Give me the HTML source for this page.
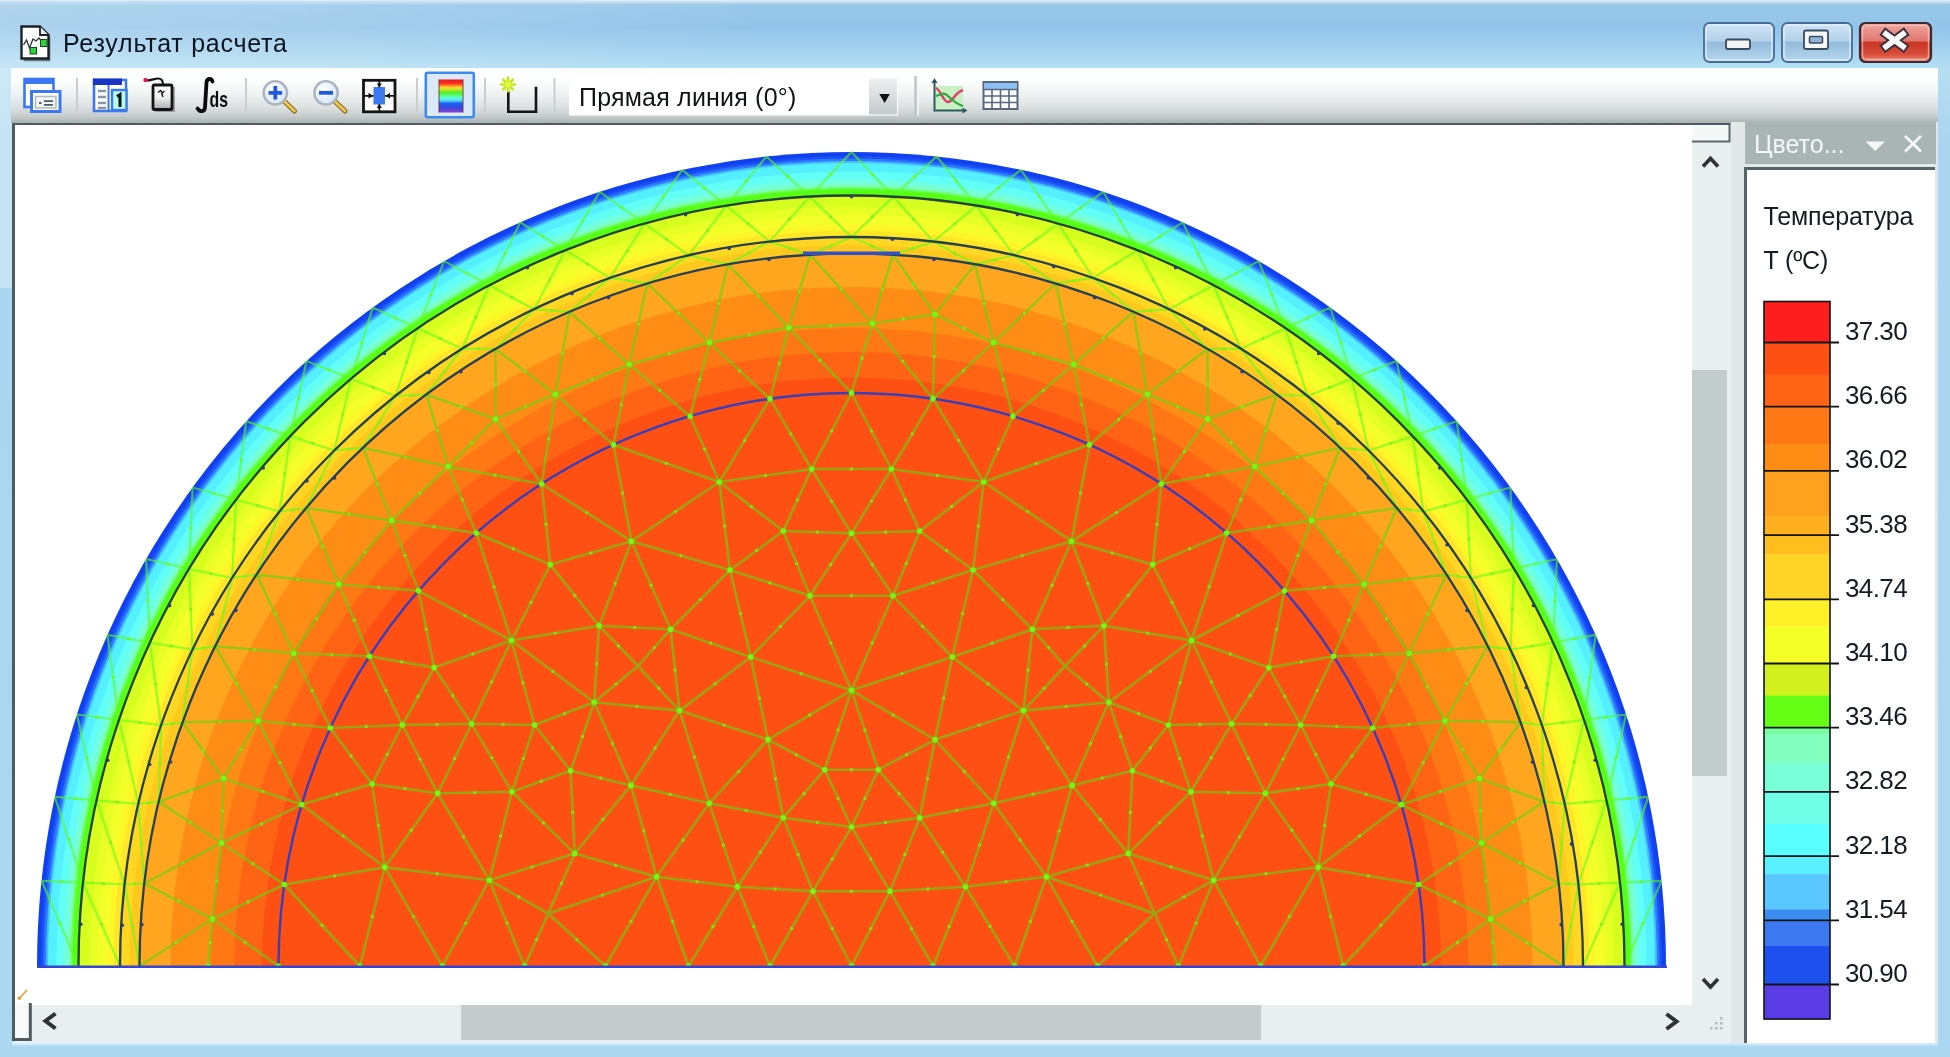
<!DOCTYPE html>
<html lang="ru"><head><meta charset="utf-8"><title>Результат расчета</title>
<style>
html,body{margin:0;padding:0}
body{width:1950px;height:1057px;position:relative;overflow:hidden;background:#acd7f1;font-family:"Liberation Sans","DejaVu Sans",sans-serif;color:#101820}
.abs{position:absolute}
#frame{left:0;top:0;width:1950px;height:1057px;background:linear-gradient(180deg,#e4f0f9 0,#c4def1 2px,#98c7ea 5px,#93c4e9 28px,#a2d0ee 48px,#b4dff3 68px,#aad5f0 140px,#acd7f1 100%)}
#glow{left:0;top:3px;width:760px;height:65px;background:linear-gradient(90deg,rgba(255,255,255,.24) 0,rgba(255,255,255,.16) 45%,rgba(255,255,255,0) 100%)}
#title{left:63px;top:26.500px;font-size:25px;line-height:32px;color:#0c1420;letter-spacing:.75px;white-space:nowrap}
#toolbar{left:11px;top:68px;width:1927px;height:55px;background:linear-gradient(180deg,#ffffff 0,#fcfdfd 25%,#eff2f2 48%,#dde1e1 70%,#c6cccc 88%,#a9b1b1 100%)}
#canvas{left:12px;top:122.500px;width:1680px;height:882.500px;background:#fff;border-left:3px solid #4e5c60;border-top:2.500px solid #4e5c60;box-sizing:border-box}
#lstrip{left:0;top:68px;width:12px;height:220px;background:rgba(255,255,255,.32)}
#vscroll{left:1692px;top:125px;width:39px;height:880px;background:#e9eeee}
#vthumb{left:1692px;top:370px;width:35px;height:406px;background:#c2cdcb}
#hscroll{left:14px;top:1005px;width:1717px;height:37px;background:#e9eeee}
#hthumb{left:461px;top:1005px;width:800px;height:35px;background:#c3cbcb}
#gap{left:1731px;top:122px;width:207px;height:921px;background:#e2e8e8}
#phead{left:1745px;top:122px;width:191px;height:42px;background:#a9b5b3;color:#f4f7f7;font-size:25px;line-height:45px}
#pbody{left:1744px;top:167px;width:191px;height:876px;background:#fff;border-left:3px solid #56646a;border-top:3px solid #56646a;box-sizing:border-box}
.lt{font-size:25px;line-height:30px;color:#141c24;white-space:nowrap;letter-spacing:-.15px}
.lv{font-size:26px;line-height:30px;color:#141c24;white-space:nowrap;letter-spacing:-.6px}
#wrap{position:absolute;left:-12px;top:-12px;width:1974px;height:1081px;background:#acd7f1;filter:blur(.55px)}
#in{position:absolute;left:12px;top:12px;width:1950px;height:1057px}
</style></head><body>
<div id="wrap"><div id="in">
<div id="frame" class="abs"></div><div id="glow" class="abs"></div>
<div id="title" class="abs">Результат расчета</div>
<div id="lstrip" class="abs"></div><div id="toolbar" class="abs"></div>
<div id="canvas" class="abs"></div>
<svg id="plot" width="1678" height="880" viewBox="14 125 1678 880" style="position:absolute;left:14px;top:125px">
<defs><clipPath id="half"><rect x="0" y="100" width="1700" height="867"/></clipPath></defs>
<g clip-path="url(#half)">
<ellipse cx="851.5" cy="966" rx="814.5" ry="814" fill="#1040f0"/>
<ellipse cx="851.5" cy="966" rx="810.5" ry="810" fill="#1a50f8"/>
<ellipse cx="851.5" cy="966" rx="808" ry="807.5" fill="#2e78ff"/>
<ellipse cx="851.5" cy="966" rx="805.5" ry="805" fill="#44c0ff"/>
<ellipse cx="851.5" cy="966" rx="803.5" ry="803" fill="#54f0ff"/>
<ellipse cx="851.5" cy="966" rx="795" ry="794.5" fill="#62fff6"/>
<ellipse cx="851.5" cy="966" rx="788" ry="787" fill="#72ffe2"/>
<ellipse cx="851.5" cy="966" rx="784" ry="782.5" fill="#7cffc4"/>
<ellipse cx="851.5" cy="966" rx="781" ry="779" fill="#70ff60"/>
<ellipse cx="851.5" cy="966" rx="779" ry="777" fill="#56ff14"/>
<ellipse cx="851.5" cy="966" rx="773" ry="770.5" fill="#d6ff20"/>
<ellipse cx="851.5" cy="966" rx="762" ry="759.5" fill="#e8ff26"/>
<ellipse cx="851.5" cy="966" rx="754" ry="751.5" fill="#f4ff2a"/>
<ellipse cx="851.5" cy="966" rx="744" ry="741.5" fill="#fff62a"/>
<ellipse cx="851.5" cy="966" rx="738" ry="735.5" fill="#ffe626"/>
<ellipse cx="851.5" cy="966" rx="731.5" ry="729" fill="#ffd622"/>
<ellipse cx="851.5" cy="966" rx="722" ry="721" fill="#ffc81e"/>
<ellipse cx="851.5" cy="966" rx="712" ry="712.5" fill="#ffa51e"/>
<ellipse cx="851.5" cy="966" rx="681" ry="679" fill="#ff8c14"/>
<ellipse cx="851.5" cy="966" rx="641" ry="638" fill="#ff7814"/>
<ellipse cx="851.5" cy="966" rx="617" ry="614" fill="#ff6414"/>
<ellipse cx="851.5" cy="966" rx="589.5" ry="588.5" fill="#ff5014"/>
<path d="M1544.3 801.7L1479.4 778.5M983.7 482L1071.5 541.2M770 398.8L719.3 482M813 891.2L890 891.2M993.5 342.6L935 314.2M813 891.2L851.5 827M788.7 327.6L872.3 323.5M1207.5 349L1207.6 419M851.5 393L811.6 469M426.3 394.5L448.3 466.5M489.3 880.2L442.4 966M1072 785.4L1046.4 876.8M993.7 803.3L965.5 886.8M952.3 657L1023.5 710.6M935 739.6L878.3 769.7M1409.2 653.3L1364 584.3M301.7 804.6L258 720.8M730 570L750.7 657M965.5 886.8L1014.5 966M330.3 728L293.8 653.3M1072 785.4L993.7 803.3M890 891.2L933 966M768 739.6L824.7 769.7M783.2 817.7L813 891.2M434.2 667.6L402.3 725M1226.7 533L1311.5 520.4M993.7 803.3L919.8 817.7M952.3 657L935 739.6M215.2 646.2L293.8 653.3M690.1 416.2L629.3 364.5M1446.4 574.5L1364 584.3M1544.3 801.7L1481.5 843M878.3 769.7L851.5 690.3M893 595.8L851.5 690.3M339 584.3L391.5 520.4M1132.4 770.7L1191 791.7M983.7 482L891.4 469M770 398.8L709.5 342.6M965.5 886.8L890 891.2M1372.7 728L1331 784M599 625.8L594.2 702.3M301.7 804.6L372 784M1108.8 702.3L1132.4 770.7M933 398.8L891.4 469M1191.5 640.5L1231.5 723.8M647.3 283.4L709.5 342.6M719.3 482L631.5 541.2M670.6 629.3L679.5 710.6M811.6 469L783.3 531M1128.3 853.6L1046.4 876.8M631 785.4L656.6 876.8M1104 625.8L1032.4 629.3M476.3 533L511.5 640.5M594.2 702.3L570.6 770.7M709.3 803.3L737.5 886.8M1132.4 770.7L1128.3 853.6M301.7 804.6L223.6 778.5M1401.3 804.6L1445 720.8M1073.7 364.5L993.5 342.6M1108.8 702.3L1072 785.4M770 398.8L788.7 327.6M670.6 629.3L750.7 657M293.8 653.3L339 584.3M1161.3 484L1147.5 394.2M851.5 393L872.3 323.5M631 785.4L709.3 803.3M813 891.2L770 966M893 595.8L851.5 533.2M594.2 702.3L631 785.4M709.3 803.3L783.2 817.7M1154.7 913.5L1128.3 853.6M1154.7 913.5L1097.5 966M679.5 710.6L709.3 803.3M1191.5 640.5L1104 625.8M1133.5 311.8L1073.7 364.5M933 398.8L983.7 482M284.3 884.5L359.8 966M719.3 482L811.6 469M1128.3 853.6L1213.7 880.2M182.4 722.3L223.6 778.5M824.7 769.7L878.3 769.7M511.5 640.5L599 625.8M891.4 469L851.5 533.2M1071.5 541.2L973 570M709.3 803.3L656.6 876.8M301.7 804.6L221.5 843M1401.3 804.6L1479.4 778.5M599 625.8L670.6 629.3M569.5 311.8L629.3 364.5M1191.5 640.5L1268.8 667.6M1418.7 884.5L1343.2 966M284.3 884.5L384.8 867.3M1191 791.7L1128.3 853.6M570.6 770.7L574.7 853.6M1495 966L1490.7 919M719.3 482L730 570M1340.1 447.7L1311.5 520.4M1161.3 484L1207.6 419M372 784L384.8 867.3M768 739.6L851.5 690.3M1104 625.8L1108.8 702.3M594.2 702.3L679.5 710.6M1520.6 722.3L1445 720.8M511.5 640.5L434.2 667.6M824.7 769.7L851.5 827M284.3 884.5L212.3 919M975.1 264.3L935 314.2M599 625.8L638 666M158.7 801.7L221.5 843M1418.7 884.5L1318.2 867.3M973 570L952.3 657M418.5 590.8L391.5 520.4M1032.4 629.3L1023.5 710.6M369.5 656.2L402.3 725M891.4 469L919.7 531M1071.5 541.2L1152.7 564.6M574.7 853.6L489.3 880.2M569.5 311.8L555.5 394.2M919.8 817.7L890 891.2M919.8 817.7L851.5 827M810 595.8L893 595.8M1032.4 629.3L952.3 657M1300.7 725L1265.3 793.3M709.5 342.6L788.7 327.6M631.5 541.2L550.3 564.6M1161.3 484L1254.7 466.5M369.5 656.2L434.2 667.6M811.6 469L891.4 469M512 791.7L574.7 853.6M548.3 913.5L574.7 853.6M783.3 531L730 570M548.3 913.5L605.5 966M1520.6 722.3L1479.4 778.5M1311.5 520.4L1254.7 466.5M212.3 919L221.5 843M1023.5 710.6L993.7 803.3M973 570L893 595.8M1089.5 444.8L1073.7 364.5M631.5 541.2L670.6 629.3M448.3 466.5L495.4 419M1364 584.3L1311.5 520.4M208 966L212.3 919M1424.5 966L1490.7 919M1089.5 444.8L1071.5 541.2M369.5 656.2L293.8 653.3M256.6 574.5L339 584.3M1331 784L1318.2 867.3M1284.5 590.8L1311.5 520.4M402.3 725L437.7 793.3M613.5 444.8L629.3 364.5M548.3 913.5L524.6 966M306.1 508L391.5 520.4M391.5 520.4L448.3 466.5M975.1 264.3L993.5 342.6M1265.3 793.3L1213.7 880.2M890 891.2L851.5 966M471.5 723.8L512 791.7M1152.7 564.6L1104 625.8M1276.7 394.5L1207.6 419M1023.5 710.6L1072 785.4M933 398.8L935 314.2M993.7 803.3L1046.4 876.8M541.7 484L631.5 541.2M952.3 657L851.5 690.3M437.7 793.3L489.3 880.2M730 570L810 595.8M983.7 482L973 570M548.3 913.5L656.6 876.8M330.3 728L258 720.8M1065 666L1023.5 710.6M783.3 531L851.5 533.2M783.2 817.7L737.5 886.8M541.7 484L555.5 394.2M215.2 646.2L258 720.8M1446.4 574.5L1409.2 653.3M1104 625.8L1065 666M656.6 876.8L688.5 966M256.6 574.5L293.8 653.3M1284.5 590.8L1364 584.3M1558.7 883.3L1481.5 843M402.3 725L372 784M919.7 531L973 570M810 595.8L750.7 657M1401.3 804.6L1331 784M890 891.2L851.5 827M1152.7 564.6L1191.5 640.5M647.3 283.4L629.3 364.5M330.3 728L372 784M933 398.8L872.3 323.5M1481.5 843L1479.4 778.5M1226.7 533L1191.5 640.5M727.9 264.3L709.5 342.6M1318.2 867.3L1260.6 966M550.3 564.6L599 625.8M1012.9 416.2L983.7 482M437.7 793.3L384.8 867.3M1331 784L1265.3 793.3M730 570L670.6 629.3M402.3 725L471.5 723.8M1372.7 728L1300.7 725M919.7 531L893 595.8M1108.8 702.3L1023.5 710.6M1207.6 419L1147.5 394.2M223.6 778.5L258 720.8M768 739.6L783.2 817.7M1168.4 725L1132.4 770.7M541.7 484L495.4 419M1318.2 867.3L1213.7 880.2M851.5 393L788.7 327.6M1490.7 919L1481.5 843M638 666L679.5 710.6M437.7 793.3L512 791.7M727.9 264.3L788.7 327.6M1558.7 883.3L1490.7 919M1154.7 913.5L1178.4 966M679.5 710.6L631 785.4M534.6 725L570.6 770.7M555.5 394.2L629.3 364.5M810.1 254.7L872.3 323.5M1133.5 311.8L1147.5 394.2M933 398.8L993.5 342.6M1072 785.4L1128.3 853.6M139.5 966L212.3 919M1231.5 723.8L1191 791.7M1254.7 466.5L1207.6 419M1396.9 508L1311.5 520.4M144.3 883.3L221.5 843M221.5 843L223.6 778.5M810 595.8L851.5 690.3M476.3 533L448.3 466.5M550.3 564.6L511.5 640.5M476.3 533L550.3 564.6M690.1 416.2L719.3 482M770 398.8L811.6 469M362.9 447.7L448.3 466.5M1154.7 913.5L1046.4 876.8M1401.3 804.6L1481.5 843M489.3 880.2L524.6 966M426.3 394.5L495.4 419M768 739.6L709.3 803.3M1161.3 484L1152.7 564.6M1372.7 728L1409.2 653.3M824.7 769.7L851.5 690.3M1071.5 541.2L1032.4 629.3M965.5 886.8L933 966M1108.8 702.3L1168.4 725M1191.5 640.5L1108.8 702.3M1231.5 723.8L1265.3 793.3M384.8 867.3L442.4 966M670.6 629.3L638 666M418.5 590.8L339 584.3M434.2 667.6L471.5 723.8M1396.9 508L1364 584.3M418.5 590.8L434.2 667.6M810 595.8L851.5 533.2M372 784L437.7 793.3M476.3 533L391.5 520.4M631 785.4L574.7 853.6M690.1 416.2L709.5 342.6M783.3 531L810 595.8M878.3 769.7L851.5 827M594.2 702.3L534.6 725M511.5 640.5L594.2 702.3M1132.4 770.7L1072 785.4M1055.7 283.4L993.5 342.6M362.9 447.7L391.5 520.4M495.4 419L555.5 394.2M1154.7 913.5L1213.7 880.2M679.5 710.6L768 739.6M919.8 817.7L965.5 886.8M534.6 725L512 791.7M1231.5 723.8L1168.4 725M1191.5 640.5L1168.4 725M384.8 867.3L489.3 880.2M1300.7 725L1331 784M719.3 482L783.3 531M418.5 590.8L511.5 640.5M893 595.8L952.3 657M1445 720.8L1409.2 653.3M1372.7 728L1445 720.8M1071.5 541.2L1104 625.8M511.5 640.5L534.6 725M973 570L1032.4 629.3M851.5 393L891.4 469M1300.7 725L1231.5 723.8M384.8 867.3L359.8 966M1191 791.7L1213.7 880.2M1089.5 444.8L1147.5 394.2M631.5 541.2L599 625.8M1479.4 778.5L1445 720.8M613.5 444.8L631.5 541.2M1046.4 876.8L1014.5 966M811.6 469L851.5 533.2M1055.7 283.4L1073.7 364.5M570.6 770.7L631 785.4M750.7 657L679.5 710.6M783.2 817.7L851.5 827M1161.3 484L1071.5 541.2M935 739.6L851.5 690.3M182.4 722.3L258 720.8M878.3 769.7L919.8 817.7M737.5 886.8L770 966M613.5 444.8L555.5 394.2M1284.5 590.8L1268.8 667.6M306.1 508L339 584.3M1265.3 793.3L1318.2 867.3M511.5 640.5L471.5 723.8M471.5 723.8L437.7 793.3M1276.7 394.5L1254.7 466.5M1487.8 646.2L1409.2 653.3M1032.4 629.3L1065 666M935 739.6L919.8 817.7M750.7 657L768 739.6M1340.1 447.7L1254.7 466.5M1213.7 880.2L1178.4 966M512 791.7L489.3 880.2M548.3 913.5L489.3 880.2M1284.5 590.8L1191.5 640.5M278.5 966L212.3 919M1265.3 793.3L1191 791.7M1046.4 876.8L1097.5 966M892.9 254.7L935 314.2M471.5 723.8L534.6 725M1065 666L1108.8 702.3M284.3 884.5L221.5 843M1333.5 656.2L1300.7 725M1023.5 710.6L935 739.6M158.7 801.7L223.6 778.5M1147.5 394.2L1073.7 364.5M570.6 770.7L512 791.7M1089.5 444.8L983.7 482M258 720.8L293.8 653.3M656.6 876.8L605.5 966M737.5 886.8L688.5 966M1268.8 667.6L1231.5 723.8M1046.4 876.8L965.5 886.8M495.5 349L555.5 394.2M1333.5 656.2L1364 584.3M301.7 804.6L384.8 867.3M1418.7 884.5L1481.5 843M919.7 531L851.5 533.2M1333.5 656.2L1268.8 667.6M574.7 853.6L656.6 876.8M629.3 364.5L709.5 342.6M1318.2 867.3L1343.2 966M1487.8 646.2L1445 720.8M1012.9 416.2L993.5 342.6M656.6 876.8L737.5 886.8M935 739.6L993.7 803.3M631.5 541.2L730 570M1213.7 880.2L1260.6 966M983.7 482L919.7 531M737.5 886.8L813 891.2M813 891.2L851.5 966M750.7 657L851.5 690.3M613.5 444.8L719.3 482M1207.5 349L1147.5 394.2M892.9 254.7L872.3 323.5M330.3 728L402.3 725M541.7 484L448.3 466.5M872.3 323.5L935 314.2M541.7 484L550.3 564.6M638 666L594.2 702.3M824.7 769.7L783.2 817.7M1268.8 667.6L1300.7 725M495.5 349L495.4 419M810.1 254.7L788.7 327.6M1333.5 656.2L1409.2 653.3M1563.5 966L1490.7 919M1418.7 884.5L1490.7 919M1401.3 804.6L1318.2 867.3M1226.7 533L1254.7 466.5M144.3 883.3L212.3 919M1226.7 533L1152.7 564.6M1168.4 725L1191 791.7M1012.9 416.2L1073.7 364.5M369.5 656.2L339 584.3" stroke="#5ed90f" stroke-opacity=".62" stroke-width="2.6" fill="none"/>
<path d="M1648.2 796.8L1606.4 800.4M1513.9 568.8L1470.9 578.1M1661.5 880.9L1620 882.7M54.8 796.8L83 882.7M688.7 255.3L647.3 283.4M76.9 714.5L96.6 800.4M149.9 642.5L192.4 649.7M189.1 568.8L232.1 578.1M1240.7 348.7L1207.5 349M444.2 261.1L417.7 328.3M1466.9 499.7L1423.4 511.5M644.7 223.6L688.7 255.3M1564.7 803.8L1558.7 883.3M1020.8 169.8L1058.3 223.6M1578.4 884.4L1563.5 966M124.6 884.4L144.3 883.3M1510.4 487.5L1513.9 568.8M149.9 642.5L161 725.2M1285.3 328.3L1307.6 396M372.7 307.5L351.1 378.8M189.1 568.8L192.4 649.7M334.3 450.5L362.9 447.7M565.4 250.2L609.9 277.9M395.4 396L426.3 394.5M936.6 156.5L893.3 196.6M644.7 223.6L609.9 277.9M1564.7 803.8L1544.3 801.7M146.1 559L189.1 568.8M1020.8 169.8L976.6 205.7M1137.6 250.2L1168.9 309.2M933.4 241.6L975.1 264.3M192.6 487.5L236.1 499.7M1168.9 309.2L1133.5 311.8M1213.6 285.3L1240.7 348.7M1456.8 421.3L1412.7 436.1M1510.4 487.5L1466.9 499.7M1553.1 642.5L1542 725.2M1542 725.2L1520.6 722.3M1584 720L1564.7 803.8M334.3 450.5L306.1 508M565.4 250.2L534.1 309.2M851.5 237L892.9 254.7M146.1 559L149.9 642.5M1137.6 250.2L1093.1 277.9M1368.7 450.5L1396.9 508M599.8 191.8L644.7 223.6M682.2 169.8L726.4 205.7M1553.1 642.5L1510.6 649.7M1182.8 222.4L1213.6 285.3M1258.7 261.1L1285.3 328.3M107.4 634.9L119 720M236.1 499.7L279.6 511.5M1595.6 634.9L1584 720M279.6 511.5L256.6 574.5M290.3 436.1L334.3 450.5M1626.1 714.5L1606.4 800.4M520.2 222.4L489.4 285.3M1368.7 450.5L1340.1 447.7M599.8 191.8L565.4 250.2M726.4 205.7L769.6 241.6M41.5 880.9L83 882.7M769.6 241.6L727.9 264.3M809.7 196.6L851.5 237M1103.2 191.8L1058.3 223.6M1182.8 222.4L1137.6 250.2M138.3 803.8L158.7 801.7M1307.6 396L1276.7 394.5M1556.9 559L1553.1 642.5M1351.9 378.8L1368.7 450.5M236.1 499.7L232.1 578.1M1595.6 634.9L1553.1 642.5M462.3 348.7L495.5 349M726.4 205.7L688.7 255.3M246.2 421.3L290.3 436.1M1556.9 559L1513.9 568.8M766.4 156.5L809.7 196.6M1578.4 884.4L1558.7 883.3M1620 882.7L1583 966M1014.3 255.3L1055.7 283.4M124.6 884.4L139.5 966M96.6 800.4L138.3 803.8M1285.3 328.3L1240.7 348.7M1396.5 361.1L1412.7 436.1M246.2 421.3L236.1 499.7M1606.4 800.4L1578.4 884.4M395.4 396L362.9 447.7M417.7 328.3L462.3 348.7M83 882.7L124.6 884.4M766.4 156.5L726.4 205.7M933.4 241.6L892.9 254.7M976.6 205.7L1014.3 255.3M192.6 487.5L189.1 568.8M1213.6 285.3L1168.9 309.2M1330.3 307.5L1351.9 378.8M1014.3 255.3L975.1 264.3M351.1 378.8L395.4 396M1423.4 511.5L1446.4 574.5M1470.9 578.1L1487.8 646.2M1584 720L1542 725.2M1648.2 796.8L1620 882.7M1606.4 800.4L1564.7 803.8M54.8 796.8L96.6 800.4M851.5 237L810.1 254.7M83 882.7L120 966M161 725.2L182.4 722.3M192.4 649.7L215.2 646.2M351.1 378.8L334.3 450.5M1423.4 511.5L1396.9 508M682.2 169.8L644.7 223.6M609.9 277.9L647.3 283.4M893.3 196.6L933.4 241.6M1258.7 261.1L1213.6 285.3M1412.7 436.1L1423.4 511.5M161 725.2L158.7 801.7M290.3 436.1L279.6 511.5M192.4 649.7L182.4 722.3M372.7 307.5L417.7 328.3M1626.1 714.5L1584 720M534.1 309.2L569.5 311.8M41.5 880.9L78.5 966M809.7 196.6L769.6 241.6M609.9 277.9L569.5 311.8M936.6 156.5L976.6 205.7M893.3 196.6L851.5 237M1093.1 277.9L1133.5 311.8M306.5 361.1L351.1 378.8M1168.9 309.2L1207.5 349M138.3 803.8L144.3 883.3M1351.9 378.8L1307.6 396M1456.8 421.3L1466.9 499.7M1412.7 436.1L1368.7 450.5M1510.6 649.7L1520.6 722.3M851.5 152L893.3 196.6M462.3 348.7L426.3 394.5M1542 725.2L1544.3 801.7M534.1 309.2L495.5 349M119 720L161 725.2M1093.1 277.9L1055.7 283.4M306.5 361.1L290.3 436.1M489.4 285.3L534.1 309.2M1510.6 649.7L1487.8 646.2M851.5 152L809.7 196.6M1620 882.7L1578.4 884.4M1058.3 223.6L1093.1 277.9M96.6 800.4L124.6 884.4M107.4 634.9L149.9 642.5M1396.5 361.1L1351.9 378.8M119 720L138.3 803.8M232.1 578.1L256.6 574.5M1513.9 568.8L1510.6 649.7M279.6 511.5L306.1 508M1661.5 880.9L1624.5 966M417.7 328.3L395.4 396M520.2 222.4L565.4 250.2M489.4 285.3L462.3 348.7M688.7 255.3L727.9 264.3M76.9 714.5L119 720M769.6 241.6L810.1 254.7M976.6 205.7L933.4 241.6M1103.2 191.8L1137.6 250.2M1330.3 307.5L1285.3 328.3M1058.3 223.6L1014.3 255.3M1240.7 348.7L1276.7 394.5M444.2 261.1L489.4 285.3M1466.9 499.7L1470.9 578.1M1307.6 396L1340.1 447.7M1470.9 578.1L1446.4 574.5M232.1 578.1L215.2 646.2" stroke="#58ff18" stroke-opacity=".6" stroke-width="2.2" fill="none"/>
<ellipse cx="851.5" cy="966" rx="773" ry="770.5" fill="none" stroke="#26403a" stroke-width="2.3"/>
<ellipse cx="851.5" cy="966" rx="731.5" ry="729" fill="none" stroke="#26404c" stroke-width="2.3"/>
<ellipse cx="851.5" cy="966" rx="712" ry="712.5" fill="none" stroke="#264054" stroke-width="2.3"/>
<ellipse cx="851.5" cy="966" rx="573" ry="573" fill="none" stroke="#3a3eb8" stroke-width="2.4"/>
<g fill="#7cf018" fill-opacity=".8"><circle cx="1511.9" cy="790.1" r="1.7"/><circle cx="1627.3" cy="798.6" r="1.7"/><circle cx="1492.4" cy="573.5" r="1.7"/><circle cx="1027.6" cy="511.6" r="1.7"/><circle cx="744.6" cy="440.4" r="1.7"/><circle cx="851.5" cy="891.2" r="1.7"/><circle cx="964.2" cy="328.4" r="1.7"/><circle cx="832.2" cy="859.1" r="1.7"/><circle cx="830.5" cy="325.6" r="1.7"/><circle cx="1207.5" cy="384" r="1.7"/><circle cx="1640.8" cy="881.8" r="1.7"/><circle cx="831.5" cy="431" r="1.7"/><circle cx="437.3" cy="430.5" r="1.7"/><circle cx="465.9" cy="923.1" r="1.7"/><circle cx="1059.2" cy="831.1" r="1.7"/><circle cx="68.9" cy="839.7" r="1.7"/><circle cx="668" cy="269.4" r="1.7"/><circle cx="979.6" cy="845" r="1.7"/><circle cx="987.9" cy="683.8" r="1.7"/><circle cx="86.7" cy="757.4" r="1.7"/><circle cx="171.2" cy="646.1" r="1.7"/><circle cx="906.6" cy="754.7" r="1.7"/><circle cx="210.6" cy="573.5" r="1.7"/><circle cx="1386.6" cy="618.8" r="1.7"/><circle cx="279.9" cy="762.7" r="1.7"/><circle cx="740.4" cy="613.5" r="1.7"/><circle cx="990" cy="926.4" r="1.7"/><circle cx="312" cy="690.6" r="1.7"/><circle cx="1224.1" cy="348.8" r="1.7"/><circle cx="1032.8" cy="794.3" r="1.7"/><circle cx="911.5" cy="928.6" r="1.7"/><circle cx="431" cy="294.7" r="1.7"/><circle cx="796.4" cy="754.7" r="1.7"/><circle cx="1445.1" cy="505.6" r="1.7"/><circle cx="798.1" cy="854.5" r="1.7"/><circle cx="418.2" cy="696.3" r="1.7"/><circle cx="1269.1" cy="526.7" r="1.7"/><circle cx="956.8" cy="810.5" r="1.7"/><circle cx="943.6" cy="698.3" r="1.7"/><circle cx="254.5" cy="649.8" r="1.7"/><circle cx="666.7" cy="239.4" r="1.7"/><circle cx="659.7" cy="390.4" r="1.7"/><circle cx="1405.2" cy="579.4" r="1.7"/><circle cx="1561.7" cy="843.5" r="1.7"/><circle cx="1512.9" cy="822.3" r="1.7"/><circle cx="864.9" cy="730" r="1.7"/><circle cx="872.2" cy="643" r="1.7"/><circle cx="1039.6" cy="196.7" r="1.7"/><circle cx="365.2" cy="552.3" r="1.7"/><circle cx="1161.7" cy="781.2" r="1.7"/><circle cx="937.5" cy="475.5" r="1.7"/><circle cx="739.7" cy="370.7" r="1.7"/><circle cx="1571" cy="925.2" r="1.7"/><circle cx="927.8" cy="889" r="1.7"/><circle cx="1351.9" cy="756" r="1.7"/><circle cx="596.6" cy="664" r="1.7"/><circle cx="336.9" cy="794.3" r="1.7"/><circle cx="1120.6" cy="736.5" r="1.7"/><circle cx="912.2" cy="433.9" r="1.7"/><circle cx="1211.5" cy="682.1" r="1.7"/><circle cx="678.4" cy="313" r="1.7"/><circle cx="675.4" cy="511.6" r="1.7"/><circle cx="675" cy="670" r="1.7"/><circle cx="134.5" cy="883.8" r="1.7"/><circle cx="1512.1" cy="528.2" r="1.7"/><circle cx="797.5" cy="500" r="1.7"/><circle cx="155.5" cy="683.9" r="1.7"/><circle cx="1296.4" cy="362.2" r="1.7"/><circle cx="1087.3" cy="865.2" r="1.7"/><circle cx="643.8" cy="831.1" r="1.7"/><circle cx="1068.2" cy="627.5" r="1.7"/><circle cx="493.9" cy="586.7" r="1.7"/><circle cx="361.9" cy="343.1" r="1.7"/><circle cx="582.4" cy="736.5" r="1.7"/><circle cx="190.8" cy="609.2" r="1.7"/><circle cx="348.6" cy="449.1" r="1.7"/><circle cx="723.4" cy="845" r="1.7"/><circle cx="1130.3" cy="812.2" r="1.7"/><circle cx="262.7" cy="791.5" r="1.7"/><circle cx="1423.1" cy="762.7" r="1.7"/><circle cx="587.6" cy="264.1" r="1.7"/><circle cx="410.9" cy="395.3" r="1.7"/><circle cx="1033.6" cy="353.6" r="1.7"/><circle cx="1090.4" cy="743.8" r="1.7"/><circle cx="779.3" cy="363.2" r="1.7"/><circle cx="710.7" cy="643.1" r="1.7"/><circle cx="316.4" cy="618.8" r="1.7"/><circle cx="915" cy="176.5" r="1.7"/><circle cx="1154.4" cy="439.1" r="1.7"/><circle cx="861.9" cy="358.2" r="1.7"/><circle cx="627.3" cy="250.7" r="1.7"/><circle cx="670.1" cy="794.3" r="1.7"/><circle cx="791.5" cy="928.6" r="1.7"/><circle cx="1554.5" cy="802.7" r="1.7"/><circle cx="167.6" cy="563.9" r="1.7"/><circle cx="872.2" cy="564.5" r="1.7"/><circle cx="998.7" cy="187.7" r="1.7"/><circle cx="1153.3" cy="279.7" r="1.7"/><circle cx="612.6" cy="743.8" r="1.7"/><circle cx="746.2" cy="810.5" r="1.7"/><circle cx="954.3" cy="253" r="1.7"/><circle cx="214.3" cy="493.6" r="1.7"/><circle cx="1141.5" cy="883.5" r="1.7"/><circle cx="1151.2" cy="310.5" r="1.7"/><circle cx="1126.1" cy="939.8" r="1.7"/><circle cx="1227.1" cy="317" r="1.7"/><circle cx="694.4" cy="757" r="1.7"/><circle cx="1147.8" cy="633.1" r="1.7"/><circle cx="1103.6" cy="338.1" r="1.7"/><circle cx="958.4" cy="440.4" r="1.7"/><circle cx="1434.7" cy="428.7" r="1.7"/><circle cx="322.1" cy="925.2" r="1.7"/><circle cx="765.5" cy="475.5" r="1.7"/><circle cx="1488.7" cy="493.6" r="1.7"/><circle cx="1547.5" cy="683.9" r="1.7"/><circle cx="1171" cy="866.9" r="1.7"/><circle cx="203" cy="750.4" r="1.7"/><circle cx="851.5" cy="769.7" r="1.7"/><circle cx="1531.3" cy="723.8" r="1.7"/><circle cx="555.2" cy="633.1" r="1.7"/><circle cx="871.5" cy="501.1" r="1.7"/><circle cx="1022.2" cy="555.6" r="1.7"/><circle cx="1574.3" cy="761.9" r="1.7"/><circle cx="320.2" cy="479.3" r="1.7"/><circle cx="683" cy="840" r="1.7"/><circle cx="261.6" cy="823.8" r="1.7"/><circle cx="1440.3" cy="791.5" r="1.7"/><circle cx="634.8" cy="627.5" r="1.7"/><circle cx="549.7" cy="279.7" r="1.7"/><circle cx="599.4" cy="338.1" r="1.7"/><circle cx="1230.2" cy="654" r="1.7"/><circle cx="1380.9" cy="925.2" r="1.7"/><circle cx="334.6" cy="875.9" r="1.7"/><circle cx="1159.7" cy="822.7" r="1.7"/><circle cx="572.7" cy="812.2" r="1.7"/><circle cx="1492.8" cy="942.5" r="1.7"/><circle cx="724.6" cy="526" r="1.7"/><circle cx="872.2" cy="245.9" r="1.7"/><circle cx="1325.8" cy="484.1" r="1.7"/><circle cx="1184.4" cy="451.5" r="1.7"/><circle cx="378.4" cy="825.6" r="1.7"/><circle cx="809.8" cy="715" r="1.7"/><circle cx="1106.4" cy="664" r="1.7"/><circle cx="148" cy="600.7" r="1.7"/><circle cx="636.9" cy="706.5" r="1.7"/><circle cx="1115.4" cy="264.1" r="1.7"/><circle cx="1482.8" cy="721.6" r="1.7"/><circle cx="472.9" cy="654" r="1.7"/><circle cx="838.1" cy="798.4" r="1.7"/><circle cx="248.3" cy="901.7" r="1.7"/><circle cx="955.1" cy="289.3" r="1.7"/><circle cx="618.5" cy="645.9" r="1.7"/><circle cx="1382.8" cy="479.3" r="1.7"/><circle cx="190.1" cy="822.3" r="1.7"/><circle cx="1368.4" cy="875.9" r="1.7"/><circle cx="622.3" cy="207.7" r="1.7"/><circle cx="962.6" cy="613.5" r="1.7"/><circle cx="405" cy="555.6" r="1.7"/><circle cx="1028" cy="670" r="1.7"/><circle cx="704.3" cy="187.7" r="1.7"/><circle cx="1531.8" cy="646.1" r="1.7"/><circle cx="385.9" cy="690.6" r="1.7"/><circle cx="905.5" cy="500" r="1.7"/><circle cx="1112.1" cy="552.9" r="1.7"/><circle cx="1198.2" cy="253.8" r="1.7"/><circle cx="532" cy="866.9" r="1.7"/><circle cx="562.5" cy="353" r="1.7"/><circle cx="904.9" cy="854.5" r="1.7"/><circle cx="1272" cy="294.7" r="1.7"/><circle cx="885.6" cy="822.4" r="1.7"/><circle cx="113.2" cy="677.4" r="1.7"/><circle cx="851.5" cy="595.8" r="1.7"/><circle cx="992.4" cy="643.1" r="1.7"/><circle cx="1283" cy="759.1" r="1.7"/><circle cx="749.1" cy="335.1" r="1.7"/><circle cx="590.9" cy="552.9" r="1.7"/><circle cx="257.9" cy="505.6" r="1.7"/><circle cx="1208" cy="475.2" r="1.7"/><circle cx="401.8" cy="661.9" r="1.7"/><circle cx="851.5" cy="469" r="1.7"/><circle cx="1589.8" cy="677.4" r="1.7"/><circle cx="268.1" cy="543" r="1.7"/><circle cx="543.4" cy="822.7" r="1.7"/><circle cx="561.5" cy="883.5" r="1.7"/><circle cx="756.6" cy="550.5" r="1.7"/><circle cx="312.3" cy="443.3" r="1.7"/><circle cx="576.9" cy="939.8" r="1.7"/><circle cx="1500" cy="750.4" r="1.7"/><circle cx="1283.1" cy="493.4" r="1.7"/><circle cx="1616.3" cy="757.4" r="1.7"/><circle cx="504.8" cy="253.8" r="1.7"/><circle cx="216.9" cy="881" r="1.7"/><circle cx="1354.4" cy="449.1" r="1.7"/><circle cx="1008.6" cy="757" r="1.7"/><circle cx="582.6" cy="221" r="1.7"/><circle cx="748" cy="223.6" r="1.7"/><circle cx="933" cy="582.9" r="1.7"/><circle cx="1081.6" cy="404.6" r="1.7"/><circle cx="62.2" cy="881.8" r="1.7"/><circle cx="748.7" cy="253" r="1.7"/><circle cx="830.6" cy="216.8" r="1.7"/><circle cx="651" cy="585.2" r="1.7"/><circle cx="1080.7" cy="207.7" r="1.7"/><circle cx="471.9" cy="442.8" r="1.7"/><circle cx="1337.8" cy="552.3" r="1.7"/><circle cx="1160.2" cy="236.3" r="1.7"/><circle cx="148.5" cy="802.7" r="1.7"/><circle cx="210.2" cy="942.5" r="1.7"/><circle cx="1292.1" cy="395.3" r="1.7"/><circle cx="1457.6" cy="942.5" r="1.7"/><circle cx="1555" cy="600.7" r="1.7"/><circle cx="1360.3" cy="414.6" r="1.7"/><circle cx="1080.5" cy="493" r="1.7"/><circle cx="331.6" cy="654.8" r="1.7"/><circle cx="234.1" cy="538.9" r="1.7"/><circle cx="297.8" cy="579.4" r="1.7"/><circle cx="1324.6" cy="825.6" r="1.7"/><circle cx="1298" cy="555.6" r="1.7"/><circle cx="1574.3" cy="638.7" r="1.7"/><circle cx="420" cy="759.1" r="1.7"/><circle cx="621.4" cy="404.6" r="1.7"/><circle cx="536.5" cy="939.8" r="1.7"/><circle cx="348.8" cy="514.2" r="1.7"/><circle cx="419.9" cy="493.4" r="1.7"/><circle cx="984.3" cy="303.5" r="1.7"/><circle cx="1239.5" cy="836.8" r="1.7"/><circle cx="478.9" cy="348.8" r="1.7"/><circle cx="870.8" cy="928.6" r="1.7"/><circle cx="491.8" cy="757.8" r="1.7"/><circle cx="1128.3" cy="595.2" r="1.7"/><circle cx="1242.1" cy="406.7" r="1.7"/><circle cx="1047.8" cy="748" r="1.7"/><circle cx="934" cy="356.5" r="1.7"/><circle cx="1020.1" cy="840" r="1.7"/><circle cx="707.6" cy="230.5" r="1.7"/><circle cx="586.6" cy="512.6" r="1.7"/><circle cx="901.9" cy="673.6" r="1.7"/><circle cx="463.5" cy="836.8" r="1.7"/><circle cx="268.3" cy="428.7" r="1.7"/><circle cx="770" cy="582.9" r="1.7"/><circle cx="978.4" cy="526" r="1.7"/><circle cx="602.5" cy="895.1" r="1.7"/><circle cx="294.1" cy="724.4" r="1.7"/><circle cx="1044.2" cy="688.3" r="1.7"/><circle cx="817.4" cy="532.1" r="1.7"/><circle cx="760.4" cy="852.2" r="1.7"/><circle cx="1535.4" cy="563.9" r="1.7"/><circle cx="548.6" cy="439.1" r="1.7"/><circle cx="236.6" cy="683.5" r="1.7"/><circle cx="788" cy="176.5" r="1.7"/><circle cx="1427.8" cy="613.9" r="1.7"/><circle cx="1084.5" cy="645.9" r="1.7"/><circle cx="672.5" cy="921.4" r="1.7"/><circle cx="275.2" cy="613.9" r="1.7"/><circle cx="1568.5" cy="883.8" r="1.7"/><circle cx="1324.3" cy="587.5" r="1.7"/><circle cx="1520.1" cy="863.1" r="1.7"/><circle cx="1601.5" cy="924.3" r="1.7"/><circle cx="387.1" cy="754.5" r="1.7"/><circle cx="946.4" cy="550.5" r="1.7"/><circle cx="1035" cy="269.4" r="1.7"/><circle cx="780.4" cy="626.4" r="1.7"/><circle cx="1366.1" cy="794.3" r="1.7"/><circle cx="870.8" cy="859.1" r="1.7"/><circle cx="1172.1" cy="602.5" r="1.7"/><circle cx="638.3" cy="324" r="1.7"/><circle cx="132" cy="925.2" r="1.7"/><circle cx="351.1" cy="756" r="1.7"/><circle cx="117.5" cy="802.1" r="1.7"/><circle cx="902.7" cy="361.2" r="1.7"/><circle cx="1480.5" cy="810.8" r="1.7"/><circle cx="1209.1" cy="586.7" r="1.7"/><circle cx="718.7" cy="303.5" r="1.7"/><circle cx="1263" cy="338.5" r="1.7"/><circle cx="1289.4" cy="916.6" r="1.7"/><circle cx="1404.6" cy="398.6" r="1.7"/><circle cx="574.6" cy="595.2" r="1.7"/><circle cx="998.3" cy="449.1" r="1.7"/><circle cx="411.2" cy="830.3" r="1.7"/><circle cx="1298.2" cy="788.6" r="1.7"/><circle cx="241.2" cy="460.5" r="1.7"/><circle cx="700.3" cy="599.6" r="1.7"/><circle cx="436.9" cy="724.4" r="1.7"/><circle cx="1336.7" cy="726.5" r="1.7"/><circle cx="906.4" cy="563.4" r="1.7"/><circle cx="1592.4" cy="842.4" r="1.7"/><circle cx="379.2" cy="421.9" r="1.7"/><circle cx="1066.2" cy="706.5" r="1.7"/><circle cx="440" cy="338.5" r="1.7"/><circle cx="1177.5" cy="406.6" r="1.7"/><circle cx="240.8" cy="749.6" r="1.7"/><circle cx="775.6" cy="778.7" r="1.7"/><circle cx="1150.4" cy="747.9" r="1.7"/><circle cx="103.8" cy="883.5" r="1.7"/><circle cx="518.6" cy="451.5" r="1.7"/><circle cx="1266" cy="873.8" r="1.7"/><circle cx="820.1" cy="360.3" r="1.7"/><circle cx="1486.1" cy="881" r="1.7"/><circle cx="746.4" cy="181.1" r="1.7"/><circle cx="658.8" cy="688.3" r="1.7"/><circle cx="474.9" cy="792.5" r="1.7"/><circle cx="913.2" cy="248.1" r="1.7"/><circle cx="995.4" cy="230.5" r="1.7"/><circle cx="758.3" cy="296" r="1.7"/><circle cx="1524.7" cy="901.1" r="1.7"/><circle cx="190.9" cy="528.2" r="1.7"/><circle cx="1166.6" cy="939.8" r="1.7"/><circle cx="1191.2" cy="297.2" r="1.7"/><circle cx="655.2" cy="748" r="1.7"/><circle cx="1341.1" cy="343.1" r="1.7"/><circle cx="994.7" cy="259.8" r="1.7"/><circle cx="552.6" cy="747.9" r="1.7"/><circle cx="592.4" cy="379.4" r="1.7"/><circle cx="841.2" cy="289.1" r="1.7"/><circle cx="1140.5" cy="353" r="1.7"/><circle cx="963.3" cy="370.7" r="1.7"/><circle cx="1100.2" cy="819.5" r="1.7"/><circle cx="175.9" cy="942.5" r="1.7"/><circle cx="373.2" cy="387.4" r="1.7"/><circle cx="1211.2" cy="757.8" r="1.7"/><circle cx="1231.2" cy="442.8" r="1.7"/><circle cx="1434.9" cy="543" r="1.7"/><circle cx="1354.2" cy="514.2" r="1.7"/><circle cx="182.9" cy="863.1" r="1.7"/><circle cx="222.6" cy="810.8" r="1.7"/><circle cx="830.8" cy="643" r="1.7"/><circle cx="462.3" cy="499.7" r="1.7"/><circle cx="1479.3" cy="612.2" r="1.7"/><circle cx="530.9" cy="602.5" r="1.7"/><circle cx="513.3" cy="548.8" r="1.7"/><circle cx="704.7" cy="449.1" r="1.7"/><circle cx="1563" cy="722.6" r="1.7"/><circle cx="1634.1" cy="839.7" r="1.7"/><circle cx="790.8" cy="433.9" r="1.7"/><circle cx="405.6" cy="457.1" r="1.7"/><circle cx="1100.6" cy="895.1" r="1.7"/><circle cx="1441.4" cy="823.8" r="1.7"/><circle cx="1585.5" cy="802.1" r="1.7"/><circle cx="507" cy="923.1" r="1.7"/><circle cx="460.9" cy="406.7" r="1.7"/><circle cx="75.7" cy="798.6" r="1.7"/><circle cx="830.8" cy="245.9" r="1.7"/><circle cx="738.6" cy="771.5" r="1.7"/><circle cx="101.5" cy="924.3" r="1.7"/><circle cx="171.7" cy="723.8" r="1.7"/><circle cx="1157" cy="524.3" r="1.7"/><circle cx="203.8" cy="648" r="1.7"/><circle cx="1391" cy="690.6" r="1.7"/><circle cx="838.1" cy="730" r="1.7"/><circle cx="1052" cy="585.2" r="1.7"/><circle cx="949.2" cy="926.4" r="1.7"/><circle cx="1138.6" cy="713.6" r="1.7"/><circle cx="1150.2" cy="671.4" r="1.7"/><circle cx="342.7" cy="414.6" r="1.7"/><circle cx="1248.4" cy="758.5" r="1.7"/><circle cx="413.6" cy="916.6" r="1.7"/><circle cx="654.3" cy="647.6" r="1.7"/><circle cx="378.7" cy="587.5" r="1.7"/><circle cx="1410.2" cy="509.7" r="1.7"/><circle cx="452.9" cy="695.7" r="1.7"/><circle cx="1380.5" cy="546.2" r="1.7"/><circle cx="426.3" cy="629.2" r="1.7"/><circle cx="663.4" cy="196.7" r="1.7"/><circle cx="830.8" cy="564.5" r="1.7"/><circle cx="404.9" cy="788.6" r="1.7"/><circle cx="628.6" cy="280.7" r="1.7"/><circle cx="433.9" cy="526.7" r="1.7"/><circle cx="602.9" cy="819.5" r="1.7"/><circle cx="699.8" cy="379.4" r="1.7"/><circle cx="913.4" cy="219.1" r="1.7"/><circle cx="796.6" cy="563.4" r="1.7"/><circle cx="864.9" cy="798.4" r="1.7"/><circle cx="564.4" cy="713.6" r="1.7"/><circle cx="552.9" cy="671.4" r="1.7"/><circle cx="1102.2" cy="778" r="1.7"/><circle cx="1024.6" cy="313" r="1.7"/><circle cx="377.2" cy="484.1" r="1.7"/><circle cx="525.5" cy="406.6" r="1.7"/><circle cx="1184.2" cy="896.9" r="1.7"/><circle cx="723.8" cy="725.1" r="1.7"/><circle cx="942.6" cy="852.2" r="1.7"/><circle cx="523.3" cy="758.4" r="1.7"/><circle cx="1236.2" cy="273.2" r="1.7"/><circle cx="1200" cy="724.4" r="1.7"/><circle cx="1180" cy="682.8" r="1.7"/><circle cx="437.1" cy="873.8" r="1.7"/><circle cx="1315.8" cy="754.5" r="1.7"/><circle cx="751.3" cy="506.5" r="1.7"/><circle cx="465" cy="615.6" r="1.7"/><circle cx="1418.1" cy="473.8" r="1.7"/><circle cx="159.9" cy="763.5" r="1.7"/><circle cx="922.6" cy="626.4" r="1.7"/><circle cx="1427.1" cy="687" r="1.7"/><circle cx="284.9" cy="473.8" r="1.7"/><circle cx="187.4" cy="686" r="1.7"/><circle cx="395.2" cy="317.9" r="1.7"/><circle cx="1408.9" cy="724.4" r="1.7"/><circle cx="1087.8" cy="583.5" r="1.7"/><circle cx="523" cy="682.8" r="1.7"/><circle cx="1605.1" cy="717.2" r="1.7"/><circle cx="551.8" cy="310.5" r="1.7"/><circle cx="1002.7" cy="599.6" r="1.7"/><circle cx="871.4" cy="431" r="1.7"/><circle cx="1266.1" cy="724.4" r="1.7"/><circle cx="372.3" cy="916.6" r="1.7"/><circle cx="1202.3" cy="836" r="1.7"/><circle cx="1118.5" cy="419.5" r="1.7"/><circle cx="60" cy="923.5" r="1.7"/><circle cx="789.6" cy="219.1" r="1.7"/><circle cx="615.2" cy="583.5" r="1.7"/><circle cx="589.7" cy="294.8" r="1.7"/><circle cx="956.6" cy="181.1" r="1.7"/><circle cx="872.4" cy="216.8" r="1.7"/><circle cx="1462.2" cy="749.6" r="1.7"/><circle cx="1113.3" cy="294.8" r="1.7"/><circle cx="622.5" cy="493" r="1.7"/><circle cx="1030.5" cy="921.4" r="1.7"/><circle cx="328.8" cy="369.9" r="1.7"/><circle cx="831.5" cy="501.1" r="1.7"/><circle cx="1064.7" cy="324" r="1.7"/><circle cx="1188.2" cy="329.1" r="1.7"/><circle cx="141.3" cy="843.5" r="1.7"/><circle cx="1329.8" cy="387.4" r="1.7"/><circle cx="1461.8" cy="460.5" r="1.7"/><circle cx="600.8" cy="778" r="1.7"/><circle cx="1390.7" cy="443.3" r="1.7"/><circle cx="715.1" cy="683.8" r="1.7"/><circle cx="1515.6" cy="686" r="1.7"/><circle cx="817.4" cy="822.4" r="1.7"/><circle cx="1116.4" cy="512.6" r="1.7"/><circle cx="893.2" cy="715" r="1.7"/><circle cx="872.4" cy="174.3" r="1.7"/><circle cx="220.2" cy="721.6" r="1.7"/><circle cx="899" cy="793.7" r="1.7"/><circle cx="753.8" cy="926.4" r="1.7"/><circle cx="584.5" cy="419.5" r="1.7"/><circle cx="444.3" cy="371.6" r="1.7"/><circle cx="1276.7" cy="629.2" r="1.7"/><circle cx="322.5" cy="546.2" r="1.7"/><circle cx="1543.1" cy="763.5" r="1.7"/><circle cx="1291.8" cy="830.3" r="1.7"/><circle cx="491.5" cy="682.1" r="1.7"/><circle cx="454.6" cy="758.5" r="1.7"/><circle cx="514.8" cy="329.1" r="1.7"/><circle cx="1265.7" cy="430.5" r="1.7"/><circle cx="1448.5" cy="649.8" r="1.7"/><circle cx="1048.7" cy="647.6" r="1.7"/><circle cx="140" cy="722.6" r="1.7"/><circle cx="927.4" cy="778.7" r="1.7"/><circle cx="759.4" cy="698.3" r="1.7"/><circle cx="1297.4" cy="457.1" r="1.7"/><circle cx="1196.1" cy="923.1" r="1.7"/><circle cx="500.6" cy="836" r="1.7"/><circle cx="518.8" cy="896.9" r="1.7"/><circle cx="1238" cy="615.6" r="1.7"/><circle cx="245.4" cy="942.5" r="1.7"/><circle cx="1074.4" cy="280.7" r="1.7"/><circle cx="1228.2" cy="792.5" r="1.7"/><circle cx="1072" cy="921.4" r="1.7"/><circle cx="913.9" cy="284.5" r="1.7"/><circle cx="298.4" cy="398.6" r="1.7"/><circle cx="503.1" cy="724.4" r="1.7"/><circle cx="1086.9" cy="684.1" r="1.7"/><circle cx="252.9" cy="863.7" r="1.7"/><circle cx="1317.1" cy="690.6" r="1.7"/><circle cx="979.2" cy="725.1" r="1.7"/><circle cx="191.1" cy="790.1" r="1.7"/><circle cx="511.8" cy="297.2" r="1.7"/><circle cx="1110.6" cy="379.4" r="1.7"/><circle cx="541.3" cy="781.2" r="1.7"/><circle cx="1036.6" cy="463.4" r="1.7"/><circle cx="275.9" cy="687" r="1.7"/><circle cx="631" cy="921.4" r="1.7"/><circle cx="1499.2" cy="648" r="1.7"/><circle cx="830.6" cy="174.3" r="1.7"/><circle cx="1599.2" cy="883.5" r="1.7"/><circle cx="713" cy="926.4" r="1.7"/><circle cx="1250.2" cy="695.7" r="1.7"/><circle cx="1006" cy="881.8" r="1.7"/><circle cx="525.5" cy="371.6" r="1.7"/><circle cx="1075.7" cy="250.7" r="1.7"/><circle cx="1348.8" cy="620.3" r="1.7"/><circle cx="343.3" cy="835.9" r="1.7"/><circle cx="1450.1" cy="863.7" r="1.7"/><circle cx="885.6" cy="532.1" r="1.7"/><circle cx="1301.2" cy="661.9" r="1.7"/><circle cx="615.7" cy="865.2" r="1.7"/><circle cx="669.4" cy="353.6" r="1.7"/><circle cx="110.6" cy="842.4" r="1.7"/><circle cx="128.7" cy="638.7" r="1.7"/><circle cx="1330.7" cy="916.6" r="1.7"/><circle cx="1466.4" cy="683.5" r="1.7"/><circle cx="1374.2" cy="369.9" r="1.7"/><circle cx="1003.2" cy="379.4" r="1.7"/><circle cx="128.7" cy="761.9" r="1.7"/><circle cx="697" cy="881.8" r="1.7"/><circle cx="244.4" cy="576.3" r="1.7"/><circle cx="964.4" cy="771.5" r="1.7"/><circle cx="680.8" cy="555.6" r="1.7"/><circle cx="1237.2" cy="923.1" r="1.7"/><circle cx="1512.2" cy="609.2" r="1.7"/><circle cx="951.7" cy="506.5" r="1.7"/><circle cx="775.2" cy="889" r="1.7"/><circle cx="292.8" cy="509.7" r="1.7"/><circle cx="832.2" cy="928.6" r="1.7"/><circle cx="801.1" cy="673.6" r="1.7"/><circle cx="666.4" cy="463.4" r="1.7"/><circle cx="1177.5" cy="371.6" r="1.7"/><circle cx="882.6" cy="289.1" r="1.7"/><circle cx="1643" cy="923.5" r="1.7"/><circle cx="406.6" cy="362.2" r="1.7"/><circle cx="542.8" cy="236.3" r="1.7"/><circle cx="366.3" cy="726.5" r="1.7"/><circle cx="475.9" cy="317" r="1.7"/><circle cx="708.3" cy="259.8" r="1.7"/><circle cx="495" cy="475.2" r="1.7"/><circle cx="903.6" cy="318.9" r="1.7"/><circle cx="97.9" cy="717.2" r="1.7"/><circle cx="546" cy="524.3" r="1.7"/><circle cx="616.1" cy="684.1" r="1.7"/><circle cx="804" cy="793.7" r="1.7"/><circle cx="789.8" cy="248.1" r="1.7"/><circle cx="955" cy="223.6" r="1.7"/><circle cx="1120.4" cy="221" r="1.7"/><circle cx="1284.8" cy="696.3" r="1.7"/><circle cx="1307.8" cy="317.9" r="1.7"/><circle cx="495.4" cy="384" r="1.7"/><circle cx="1036.3" cy="239.4" r="1.7"/><circle cx="799.4" cy="291.2" r="1.7"/><circle cx="1371.4" cy="654.8" r="1.7"/><circle cx="1258.7" cy="371.6" r="1.7"/><circle cx="1527.1" cy="942.5" r="1.7"/><circle cx="1454.7" cy="901.7" r="1.7"/><circle cx="1359.7" cy="835.9" r="1.7"/><circle cx="466.8" cy="273.2" r="1.7"/><circle cx="1468.9" cy="538.9" r="1.7"/><circle cx="1240.7" cy="499.7" r="1.7"/><circle cx="1323.8" cy="421.9" r="1.7"/><circle cx="178.3" cy="901.1" r="1.7"/><circle cx="1189.7" cy="548.8" r="1.7"/><circle cx="1179.7" cy="758.4" r="1.7"/><circle cx="1458.6" cy="576.3" r="1.7"/><circle cx="1043.3" cy="390.4" r="1.7"/><circle cx="354.2" cy="620.3" r="1.7"/><circle cx="223.7" cy="612.2" r="1.7"/></g>
<g fill="#74f814"><circle cx="278.5" cy="966" r="2.8"/><circle cx="284.3" cy="884.5" r="2.8"/><circle cx="301.7" cy="804.6" r="2.8"/><circle cx="330.3" cy="728" r="2.8"/><circle cx="369.5" cy="656.2" r="2.8"/><circle cx="418.5" cy="590.8" r="2.8"/><circle cx="476.3" cy="533" r="2.8"/><circle cx="541.7" cy="484" r="2.8"/><circle cx="613.5" cy="444.8" r="2.8"/><circle cx="690.1" cy="416.2" r="2.8"/><circle cx="770" cy="398.8" r="2.8"/><circle cx="851.5" cy="393" r="2.8"/><circle cx="933" cy="398.8" r="2.8"/><circle cx="1012.9" cy="416.2" r="2.8"/><circle cx="1089.5" cy="444.8" r="2.8"/><circle cx="1161.3" cy="484" r="2.8"/><circle cx="1226.7" cy="533" r="2.8"/><circle cx="1284.5" cy="590.8" r="2.8"/><circle cx="1333.5" cy="656.2" r="2.8"/><circle cx="1372.7" cy="728" r="2.8"/><circle cx="1401.3" cy="804.6" r="2.8"/><circle cx="1418.7" cy="884.5" r="2.8"/><circle cx="1424.5" cy="966" r="2.8"/><circle cx="208" cy="966" r="2.8"/><circle cx="212.3" cy="919" r="2.8"/><circle cx="221.5" cy="843" r="2.8"/><circle cx="223.6" cy="778.5" r="2.8"/><circle cx="258" cy="720.8" r="2.8"/><circle cx="293.8" cy="653.3" r="2.8"/><circle cx="339" cy="584.3" r="2.8"/><circle cx="391.5" cy="520.4" r="2.8"/><circle cx="448.3" cy="466.5" r="2.8"/><circle cx="495.4" cy="419" r="2.8"/><circle cx="555.5" cy="394.2" r="2.8"/><circle cx="629.3" cy="364.5" r="2.8"/><circle cx="709.5" cy="342.6" r="2.8"/><circle cx="719.3" cy="482" r="2.8"/><circle cx="811.6" cy="469" r="2.8"/><circle cx="631.5" cy="541.2" r="2.8"/><circle cx="783.3" cy="531" r="2.8"/><circle cx="550.3" cy="564.6" r="2.8"/><circle cx="730" cy="570" r="2.8"/><circle cx="511.5" cy="640.5" r="2.8"/><circle cx="599" cy="625.8" r="2.8"/><circle cx="670.6" cy="629.3" r="2.8"/><circle cx="810" cy="595.8" r="2.8"/><circle cx="750.7" cy="657" r="2.8"/><circle cx="434.2" cy="667.6" r="2.8"/><circle cx="594.2" cy="702.3" r="2.8"/><circle cx="679.5" cy="710.6" r="2.8"/><circle cx="402.3" cy="725" r="2.8"/><circle cx="471.5" cy="723.8" r="2.8"/><circle cx="534.6" cy="725" r="2.8"/><circle cx="768" cy="739.6" r="2.8"/><circle cx="824.7" cy="769.7" r="2.8"/><circle cx="570.6" cy="770.7" r="2.8"/><circle cx="372" cy="784" r="2.8"/><circle cx="437.7" cy="793.3" r="2.8"/><circle cx="512" cy="791.7" r="2.8"/><circle cx="631" cy="785.4" r="2.8"/><circle cx="709.3" cy="803.3" r="2.8"/><circle cx="783.2" cy="817.7" r="2.8"/><circle cx="574.7" cy="853.6" r="2.8"/><circle cx="384.8" cy="867.3" r="2.8"/><circle cx="489.3" cy="880.2" r="2.8"/><circle cx="656.6" cy="876.8" r="2.8"/><circle cx="737.5" cy="886.8" r="2.8"/><circle cx="813" cy="891.2" r="2.8"/><circle cx="359.8" cy="966" r="2.8"/><circle cx="442.4" cy="966" r="2.8"/><circle cx="524.6" cy="966" r="2.8"/><circle cx="605.5" cy="966" r="2.8"/><circle cx="688.5" cy="966" r="2.8"/><circle cx="770" cy="966" r="2.8"/><circle cx="1495" cy="966" r="2.8"/><circle cx="1490.7" cy="919" r="2.8"/><circle cx="1481.5" cy="843" r="2.8"/><circle cx="1479.4" cy="778.5" r="2.8"/><circle cx="1445" cy="720.8" r="2.8"/><circle cx="1409.2" cy="653.3" r="2.8"/><circle cx="1364" cy="584.3" r="2.8"/><circle cx="1311.5" cy="520.4" r="2.8"/><circle cx="1254.7" cy="466.5" r="2.8"/><circle cx="1207.6" cy="419" r="2.8"/><circle cx="1147.5" cy="394.2" r="2.8"/><circle cx="1073.7" cy="364.5" r="2.8"/><circle cx="993.5" cy="342.6" r="2.8"/><circle cx="983.7" cy="482" r="2.8"/><circle cx="891.4" cy="469" r="2.8"/><circle cx="1071.5" cy="541.2" r="2.8"/><circle cx="919.7" cy="531" r="2.8"/><circle cx="1152.7" cy="564.6" r="2.8"/><circle cx="973" cy="570" r="2.8"/><circle cx="1191.5" cy="640.5" r="2.8"/><circle cx="1104" cy="625.8" r="2.8"/><circle cx="1032.4" cy="629.3" r="2.8"/><circle cx="893" cy="595.8" r="2.8"/><circle cx="952.3" cy="657" r="2.8"/><circle cx="1268.8" cy="667.6" r="2.8"/><circle cx="1108.8" cy="702.3" r="2.8"/><circle cx="1023.5" cy="710.6" r="2.8"/><circle cx="1300.7" cy="725" r="2.8"/><circle cx="1231.5" cy="723.8" r="2.8"/><circle cx="1168.4" cy="725" r="2.8"/><circle cx="935" cy="739.6" r="2.8"/><circle cx="878.3" cy="769.7" r="2.8"/><circle cx="1132.4" cy="770.7" r="2.8"/><circle cx="1331" cy="784" r="2.8"/><circle cx="1265.3" cy="793.3" r="2.8"/><circle cx="1191" cy="791.7" r="2.8"/><circle cx="1072" cy="785.4" r="2.8"/><circle cx="993.7" cy="803.3" r="2.8"/><circle cx="919.8" cy="817.7" r="2.8"/><circle cx="1128.3" cy="853.6" r="2.8"/><circle cx="1318.2" cy="867.3" r="2.8"/><circle cx="1213.7" cy="880.2" r="2.8"/><circle cx="1046.4" cy="876.8" r="2.8"/><circle cx="965.5" cy="886.8" r="2.8"/><circle cx="890" cy="891.2" r="2.8"/><circle cx="1343.2" cy="966" r="2.8"/><circle cx="1260.6" cy="966" r="2.8"/><circle cx="1178.4" cy="966" r="2.8"/><circle cx="1097.5" cy="966" r="2.8"/><circle cx="1014.5" cy="966" r="2.8"/><circle cx="933" cy="966" r="2.8"/><circle cx="851.5" cy="533.2" r="2.8"/><circle cx="851.5" cy="690.3" r="2.8"/><circle cx="851.5" cy="827" r="2.8"/><circle cx="851.5" cy="966" r="2.8"/><circle cx="788.7" cy="327.6" r="2.8"/><circle cx="872.3" cy="323.5" r="2.8"/><circle cx="935" cy="314.2" r="2.8"/></g>
<g fill="#283c78"><circle cx="80.8" cy="924.3" r="1.8"/><circle cx="107.8" cy="760.2" r="1.8"/><circle cx="169.5" cy="605.6" r="1.8"/><circle cx="263.2" cy="467.9" r="1.8"/><circle cx="384.4" cy="353.5" r="1.8"/><circle cx="527.4" cy="267.7" r="1.8"/><circle cx="685.6" cy="214.6" r="1.8"/><circle cx="851.5" cy="196.6" r="1.8"/><circle cx="1017.4" cy="214.6" r="1.8"/><circle cx="1175.6" cy="267.7" r="1.8"/><circle cx="1318.6" cy="353.5" r="1.8"/><circle cx="1439.8" cy="467.9" r="1.8"/><circle cx="1533.5" cy="605.6" r="1.8"/><circle cx="1595.2" cy="760.2" r="1.8"/><circle cx="1622.2" cy="924.3" r="1.8"/><circle cx="122.3" cy="925.2" r="1.8"/><circle cx="149.7" cy="764.5" r="1.8"/><circle cx="212.3" cy="613.9" r="1.8"/><circle cx="306.9" cy="481" r="1.8"/><circle cx="428.9" cy="372.4" r="1.8"/><circle cx="572" cy="293.6" r="1.8"/><circle cx="729.2" cy="248.4" r="1.8"/><circle cx="892.5" cy="239.3" r="1.8"/><circle cx="1053.7" cy="266.6" r="1.8"/><circle cx="1204.8" cy="329" r="1.8"/><circle cx="1338.2" cy="423.3" r="1.8"/><circle cx="1447.1" cy="544.8" r="1.8"/><circle cx="1526.3" cy="687.5" r="1.8"/><circle cx="1571.5" cy="844.1" r="1.8"/><circle cx="141.9" cy="924.6" r="1.8"/><circle cx="170.6" cy="762" r="1.8"/><circle cx="235.9" cy="610.4" r="1.8"/><circle cx="334.5" cy="477.9" r="1.8"/><circle cx="460.9" cy="371.7" r="1.8"/><circle cx="608.4" cy="297.6" r="1.8"/><circle cx="769" cy="259.5" r="1.8"/><circle cx="934" cy="259.5" r="1.8"/><circle cx="1094.6" cy="297.6" r="1.8"/><circle cx="1242.1" cy="371.7" r="1.8"/><circle cx="1368.5" cy="477.9" r="1.8"/><circle cx="1467.1" cy="610.4" r="1.8"/><circle cx="1532.4" cy="762" r="1.8"/><circle cx="1561.1" cy="924.6" r="1.8"/></g>
</g>
<path d="M803 253.2L900 253.2" stroke="#3450c8" stroke-width="3.4"/>
<path d="M37 966.8L1667 966.8" stroke="#3446d2" stroke-width="2.4"/>
</svg>
<div id="vscroll" class="abs"></div><div id="vthumb" class="abs"></div>
<div id="hscroll" class="abs"></div><div id="hthumb" class="abs"></div>
<div class="abs" style="left:12px;top:1042px;width:1926px;height:4px;background:linear-gradient(180deg,rgba(255,255,255,.75),rgba(255,255,255,.15))"></div>
<div id="gap" class="abs"></div>
<div id="phead" class="abs"><span style="margin-left:9px">Цвето...</span></div>
<div id="pbody" class="abs"></div>
<svg class="abs" style="left:1755px;top:295px" width="100" height="735" viewBox="1755 295 100 735">
<rect x="1764" y="301.5" width="66" height="41.4" fill="#ff1e1e"/>
<rect x="1764" y="342.5" width="66" height="32.5" fill="#ff5014"/>
<rect x="1764" y="374.6" width="66" height="32.5" fill="#ff6414"/>
<rect x="1764" y="406.7" width="66" height="37.6" fill="#ff7814"/>
<rect x="1764" y="443.9" width="66" height="27.4" fill="#ff8c14"/>
<rect x="1764" y="470.9" width="66" height="45.3" fill="#ffa01e"/>
<rect x="1764" y="515.8" width="66" height="19.7" fill="#ffb01e"/>
<rect x="1764" y="535.1" width="66" height="19.7" fill="#ffbe1e"/>
<rect x="1764" y="554.4" width="66" height="45.3" fill="#ffd426"/>
<rect x="1764" y="599.3" width="66" height="27.4" fill="#fff028"/>
<rect x="1764" y="626.3" width="66" height="37.6" fill="#f4ff28"/>
<rect x="1764" y="663.5" width="66" height="32.5" fill="#d2f01e"/>
<rect x="1764" y="695.6" width="66" height="32.5" fill="#64ff14"/>
<rect x="1764" y="727.7" width="66" height="6.8" fill="#78ffa0"/>
<rect x="1764" y="734.1" width="66" height="29.3" fill="#82ffbe"/>
<rect x="1764" y="763.0" width="66" height="29.3" fill="#78ffd7"/>
<rect x="1764" y="791.9" width="66" height="32.5" fill="#6effe6"/>
<rect x="1764" y="824.0" width="66" height="32.5" fill="#5affff"/>
<rect x="1764" y="856.1" width="66" height="18.4" fill="#5af0ff"/>
<rect x="1764" y="874.1" width="66" height="35.7" fill="#5ac8ff"/>
<rect x="1764" y="909.4" width="66" height="11.3" fill="#3c8cf0"/>
<rect x="1764" y="920.3" width="66" height="26.1" fill="#3c78f0"/>
<rect x="1764" y="946.0" width="66" height="38.9" fill="#1e50f0"/>
<rect x="1764" y="984.5" width="66" height="34.9" fill="#5a3ce6"/>
<rect x="1764" y="301.5" width="66" height="717.5" fill="none" stroke="#101418" stroke-width="1.6"/>
<path d="M1764 342.5L1839 342.5" stroke="#101418" stroke-width="1.8"/>
<path d="M1764 406.7L1839 406.7" stroke="#101418" stroke-width="1.8"/>
<path d="M1764 470.9L1839 470.9" stroke="#101418" stroke-width="1.8"/>
<path d="M1764 535.1L1839 535.1" stroke="#101418" stroke-width="1.8"/>
<path d="M1764 599.3L1839 599.3" stroke="#101418" stroke-width="1.8"/>
<path d="M1764 663.5L1839 663.5" stroke="#101418" stroke-width="1.8"/>
<path d="M1764 727.7L1839 727.7" stroke="#101418" stroke-width="1.8"/>
<path d="M1764 791.9L1839 791.9" stroke="#101418" stroke-width="1.8"/>
<path d="M1764 856.1L1839 856.1" stroke="#101418" stroke-width="1.8"/>
<path d="M1764 920.3L1839 920.3" stroke="#101418" stroke-width="1.8"/>
<path d="M1764 984.5L1839 984.5" stroke="#101418" stroke-width="1.8"/>
</svg>
<div class="abs lt" style="left:1763.500px;top:201px">Температура</div>
<div class="abs lt" style="left:1763.500px;top:245px">T (ºC)</div>
<div class="abs lv" style="left:1845px;top:316.0px">37.30</div>
<div class="abs lv" style="left:1845px;top:380.2px">36.66</div>
<div class="abs lv" style="left:1845px;top:444.4px">36.02</div>
<div class="abs lv" style="left:1845px;top:508.6px">35.38</div>
<div class="abs lv" style="left:1845px;top:572.8px">34.74</div>
<div class="abs lv" style="left:1845px;top:637.0px">34.10</div>
<div class="abs lv" style="left:1845px;top:701.2px">33.46</div>
<div class="abs lv" style="left:1845px;top:765.4px">32.82</div>
<div class="abs lv" style="left:1845px;top:829.6px">32.18</div>
<div class="abs lv" style="left:1845px;top:893.8px">31.54</div>
<div class="abs lv" style="left:1845px;top:958.0px">30.90</div>
<!-- title icon -->
<svg class="abs" style="left:16px;top:22px" width="40" height="42" viewBox="16 22 40 42">
<path d="M22 27.500h18l8.500 8.500v23.500h-26.500z" fill="#28323a" opacity=".6" transform="translate(1.8 1.8)"/>
<path d="M21.500 26.500h18.500l8.500 8.500v23.500h-27z" fill="#fdfdfd" stroke="#1a2226" stroke-width="2.400"/>
<path d="M40 26.500v8.500h8.500" fill="#e8ecec" stroke="#1a2226" stroke-width="1.800"/>
<path d="M23.500 45l3-5 3 8 3.500-9 3 2 3-3 4 6" fill="none" stroke="#2a3438" stroke-width="1.300"/>
<rect x="40.500" y="39.500" width="6.500" height="7" fill="#30d040" stroke="#184820" stroke-width="1"/>
<rect x="30" y="47.500" width="6.500" height="6.500" fill="#30d040" stroke="#184820" stroke-width="1"/>
</svg>
<!-- window buttons -->
<svg class="abs" style="left:1698px;top:18px" width="240" height="50" viewBox="1698 18 240 50">
<defs>
<linearGradient id="gb" x1="0" y1="0" x2="0" y2="1"><stop offset="0" stop-color="#cfe4f4"/><stop offset=".45" stop-color="#b4d2ea"/><stop offset=".5" stop-color="#94bbdc"/><stop offset="1" stop-color="#b6d8ee"/></linearGradient>
<linearGradient id="gr" x1="0" y1="0" x2="0" y2="1"><stop offset="0" stop-color="#f0a8a0"/><stop offset=".45" stop-color="#e07870"/><stop offset=".5" stop-color="#cc3424"/><stop offset=".8" stop-color="#d84c38"/><stop offset="1" stop-color="#ec9078"/></linearGradient>
</defs>
<rect x="1704" y="23" width="70" height="39" rx="5.500" fill="url(#gb)" stroke="#4a6c94" stroke-width="1.8"/>
<rect x="1706" y="25" width="66" height="35" rx="4" fill="none" stroke="#e4f2fc" stroke-width="1.4" opacity=".85"/>
<rect x="1782" y="23" width="70" height="39" rx="5.500" fill="url(#gb)" stroke="#4a6c94" stroke-width="1.8"/>
<rect x="1784" y="25" width="66" height="35" rx="4" fill="none" stroke="#e4f2fc" stroke-width="1.4" opacity=".85"/>
<rect x="1860" y="23" width="71" height="39" rx="5.500" fill="url(#gr)" stroke="#3a2a34" stroke-width="2.2"/>
<rect x="1862.500" y="25.500" width="66" height="34" rx="4" fill="none" stroke="#f8c8c0" stroke-width="1.3" opacity=".7"/>
<rect x="1726" y="39.500" width="24" height="9.500" rx="2" fill="#f2f4f4" stroke="#3c4c60" stroke-width="1.8"/>
<rect x="1804" y="30.500" width="24" height="18.500" rx="2" fill="#f6f8f8" stroke="#3c4c60" stroke-width="1.8"/>
<rect x="1809.500" y="36.500" width="13" height="6.500" rx="1" fill="#90b4d4" stroke="#3c4c60" stroke-width="1.6"/>
<path d="M1886 34l17 12.500M1903 34l-17 12.500" stroke="#3a3040" stroke-width="9.500" stroke-linecap="square"/>
<path d="M1886 34l17 12.500M1903 34l-17 12.500" stroke="#fafafa" stroke-width="5.600" stroke-linecap="square"/>
</svg>
<!-- toolbar icons -->
<svg class="abs" style="left:11px;top:68px" width="1926" height="55" viewBox="11 68 1926 55">
<defs>
<linearGradient id="rb" x1="0" y1="0" x2="0" y2="1"><stop offset="0" stop-color="#e81818"/><stop offset=".12" stop-color="#ff3020"/><stop offset=".25" stop-color="#ffe030"/><stop offset=".4" stop-color="#50f020"/><stop offset=".55" stop-color="#60ffd0"/><stop offset=".64" stop-color="#50d8ff"/><stop offset=".72" stop-color="#2060f0"/><stop offset=".85" stop-color="#3048e0"/><stop offset="1" stop-color="#9040d0"/></linearGradient>
<linearGradient id="gg" x1="0" y1="0" x2="0" y2="1"><stop offset="0" stop-color="#fff"/><stop offset=".5" stop-color="#f0f0f0"/><stop offset="1" stop-color="#a8acac"/></linearGradient>
<linearGradient id="dd" x1="0" y1="0" x2="0" y2="1"><stop offset="0" stop-color="#eef0f0"/><stop offset="1" stop-color="#c4caca"/></linearGradient>
<radialGradient id="ln" cx=".4" cy=".35" r=".7"><stop offset="0" stop-color="#fff"/><stop offset="1" stop-color="#d4e4f4"/></radialGradient>
</defs>
<!-- separators -->
<g stroke="#c9cfcf" stroke-width="2"><path d="M77 78v34M246 78v34M417 78v34M485 78v34M554.500 78v34"/></g>
<path d="M915.500 76v40" stroke="#bcc4c4" stroke-width="2.500"/><path d="M918 76v40" stroke="#f4f6f6" stroke-width="1.500"/>
<!-- 1 windows -->
<rect x="24.500" y="79" width="29" height="28" fill="#fff" stroke="#3c78f0" stroke-width="2.600"/>
<rect x="24" y="78.500" width="30" height="5.500" fill="#3c78f0"/>
<rect x="31.500" y="91.500" width="28.500" height="20" fill="#fff" stroke="#3c78f0" stroke-width="3"/>
<rect x="35.500" y="96.500" width="20.500" height="11.500" fill="#f4f6f6" stroke="#b4bcc0" stroke-width="1.600"/>
<path d="M39 103h2.500M44 101.200h9M44 104.800h9" stroke="#4a5a70" stroke-width="1.800"/>
<!-- 2 table -->
<rect x="94" y="80" width="32" height="31" fill="#fff" stroke="#3c78f0" stroke-width="2.600"/>
<rect x="93" y="78.500" width="29" height="6.500" fill="#1a34c4"/>
<path d="M108.500 85v26" stroke="#3c78f0" stroke-width="2"/>
<path d="M98 91h8M98 97h8M98 103h8M98 108h8" stroke="#8894a8" stroke-width="2.400"/>
<rect x="112" y="90" width="14.500" height="20" fill="#b4fff0" stroke="#3c78f0" stroke-width="2.400"/>
<path d="M117 96.500l3-2v12.500" fill="none" stroke="#101010" stroke-width="3"/>
<!-- 3 probe -->
<rect x="155" y="87" width="20" height="25" fill="#6a7070" opacity=".55"/>
<rect x="153" y="85" width="19" height="24.500" rx="1.500" fill="url(#gg)" stroke="#141414" stroke-width="2.800"/>
<path d="M146 80.500c6 0 8-2 12-2s5 3 5 6" fill="none" stroke="#141414" stroke-width="2.200"/>
<circle cx="145.500" cy="80" r="2.200" fill="#e02050"/>
<path d="M158 92.500l2.500-2 2 2.500 2-2M161.500 93l1.500 4" fill="none" stroke="#202020" stroke-width="1.500"/>
<!-- 4 integral ds -->
<path d="M212.500 81.500c-1-3.500-5.500-3.500-6 1l-1.500 25c-.5 4.500-5 5-7.500 1" fill="none" stroke="#0c0c0c" stroke-width="3.800" stroke-linecap="round"/>
<text x="209.500" y="107" font-family="Liberation Sans,sans-serif" font-size="22" font-weight="bold" fill="#0c0c0c" textLength="18.500" lengthAdjust="spacingAndGlyphs">ds</text>
<!-- 5 zoom in -->
<path d="M284.500 101.500l10 9.500" stroke="#8a6c20" stroke-width="5" stroke-linecap="round"/>
<path d="M284.500 101.500l10 9.500" stroke="#f0cc50" stroke-width="2.600" stroke-linecap="round"/>
<circle cx="275.300" cy="92.800" r="11.700" fill="url(#ln)" stroke="#aab4c0" stroke-width="2.400"/>
<path d="M268.500 92.800h13.600M275.300 86v13.600" stroke="#2058e0" stroke-width="3.800"/>
<!-- 6 zoom out -->
<path d="M335 101.500l10 9.500" stroke="#8a6c20" stroke-width="5" stroke-linecap="round"/>
<path d="M335 101.500l10 9.500" stroke="#f0cc50" stroke-width="2.600" stroke-linecap="round"/>
<circle cx="326" cy="92.800" r="11.700" fill="url(#ln)" stroke="#aab4c0" stroke-width="2.400"/>
<path d="M319 92.800h14" stroke="#2058e0" stroke-width="3.800"/>
<!-- 7 fit -->
<rect x="363.500" y="80.300" width="31.500" height="31.500" fill="#fff" stroke="#141414" stroke-width="2.800"/>
<path d="M379.300 80v32M363 95.800h33" stroke="#141414" stroke-width="1.800"/>
<rect x="373.500" y="87" width="11.500" height="17.500" fill="#3c78f0"/>
<path d="M379.300 87.500l-2.600-4h5.200zM379.300 104l-2.600 4h5.200zM373 95.800l-4.500-3v6zM385.500 95.800l4.500-3v6z" fill="#141414"/>
<!-- 8 selected colour map -->
<rect x="425.800" y="72.800" width="48" height="44.500" rx="2" fill="#dbe9f6" stroke="#3c8cf0" stroke-width="2.600"/>
<rect x="439" y="79.500" width="24" height="33" fill="url(#rb)"/>
<path d="M439 79.500v33M463 79.500v33" stroke="#5a3030" stroke-width="1.200" opacity=".7"/>
<!-- 9 corner star -->
<path d="M508.300 91v20.800h27.700v-25" fill="none" stroke="#141414" stroke-width="2.600"/>
<path d="M508 76.500v16M500 84.500h16M502.500 79l11 11M513.500 79l-11 11" stroke="#c4e818" stroke-width="2.600"/>
<circle cx="508" cy="84.500" r="3" fill="#e4f83c"/>
<!-- combo -->
<rect x="569" y="77" width="329" height="38.500" fill="#fff"/>
<rect x="869" y="78.500" width="28" height="36" fill="url(#dd)"/>
<path d="M879.300 94h10.600l-5.300 9z" fill="#101010"/>
<!-- 10 chart -->
<rect x="935" y="86" width="28" height="24" fill="#c8f0c4"/>
<path d="M934.500 80v30.500h31" fill="none" stroke="#2c5c5c" stroke-width="2"/>
<path d="M934.500 78l-3 5h6zM967.500 110.500l-5-3v6z" fill="#2c5c5c"/>
<path d="M936 88c5 2 7 14 12 14s6-9 15-12" fill="none" stroke="#e04070" stroke-width="2.400"/>
<path d="M936 96c6-2 8-4 12 0s8 8 15 10" fill="none" stroke="#30a840" stroke-width="2.200"/>
<!-- 11 grid table -->
<rect x="983.500" y="82" width="34" height="27" fill="#fff" stroke="#56687c" stroke-width="2"/>
<rect x="984.500" y="83" width="32" height="6" fill="#8cc0f4"/>
<path d="M983.500 89.500h34M983.500 96h34M983.500 102.500h34M992 89.500v19.500M1000.500 89.500v19.500M1009 89.500v19.500" stroke="#56687c" stroke-width="1.600"/>
</svg>
<div class="abs" style="left:579px;top:81px;font-size:25px;line-height:32px;color:#101418;white-space:nowrap;letter-spacing:.2px" id="combotxt">Прямая линия (0°)</div>
<!-- panel header glyphs -->
<svg class="abs" style="left:1860px;top:130px" width="70" height="30" viewBox="1860 130 70 30">
<path d="M1865.500 141.500h19.500l-9.750 9.500z" fill="#f6f8f8"/>
<path d="M1905 136l16 15.500M1921 136l-16 15.500" stroke="#f6f8f8" stroke-width="2.800"/>
</svg>
<!-- scrollbar glyphs -->
<svg class="abs" style="left:12px;top:123px" width="1722" height="922" viewBox="12 123 1722 922">
<rect x="1692" y="122.500" width="38.500" height="2.500" fill="#4e5c60"/><rect x="1692" y="125" width="37" height="16" fill="#f6f8f8"/>
<path d="M1692 141.500h37.500v-16.500" fill="none" stroke="#5a6868" stroke-width="2"/>
<path d="M1703 166.500l7.500-8 7.500 8" fill="none" stroke="#2a3438" stroke-width="3.600"/>
<path d="M1703 979l7.500 8 7.500-8" fill="none" stroke="#2a3438" stroke-width="3.600"/>
<path d="M55.500 1013.500l-10 7.500 10 7.500" fill="none" stroke="#2a3438" stroke-width="4"/>
<path d="M1666.500 1014l10 7.500-10 7.500" fill="none" stroke="#2a3438" stroke-width="4"/>
<rect x="15" y="1003" width="14" height="36" fill="#f8fafa"/>
<path d="M13.500 1000v39.500h16.800v-36.500" fill="none" stroke="#4e5c60" stroke-width="3"/>
<path d="M19.500 998l7.500-8" stroke="#e8a040" stroke-width="1.800"/><circle cx="19.300" cy="998.300" r="1.800" fill="#e8a030"/>
<g fill="#b4bcbc"><rect x="1720" y="1017" width="2.500" height="2.500"/><rect x="1715" y="1022" width="2.500" height="2.500"/><rect x="1720" y="1022" width="2.500" height="2.500"/><rect x="1710" y="1027" width="2.500" height="2.500"/><rect x="1715" y="1027" width="2.500" height="2.500"/><rect x="1720" y="1027" width="2.500" height="2.500"/></g>
</svg>

</div></div>
</body></html>
